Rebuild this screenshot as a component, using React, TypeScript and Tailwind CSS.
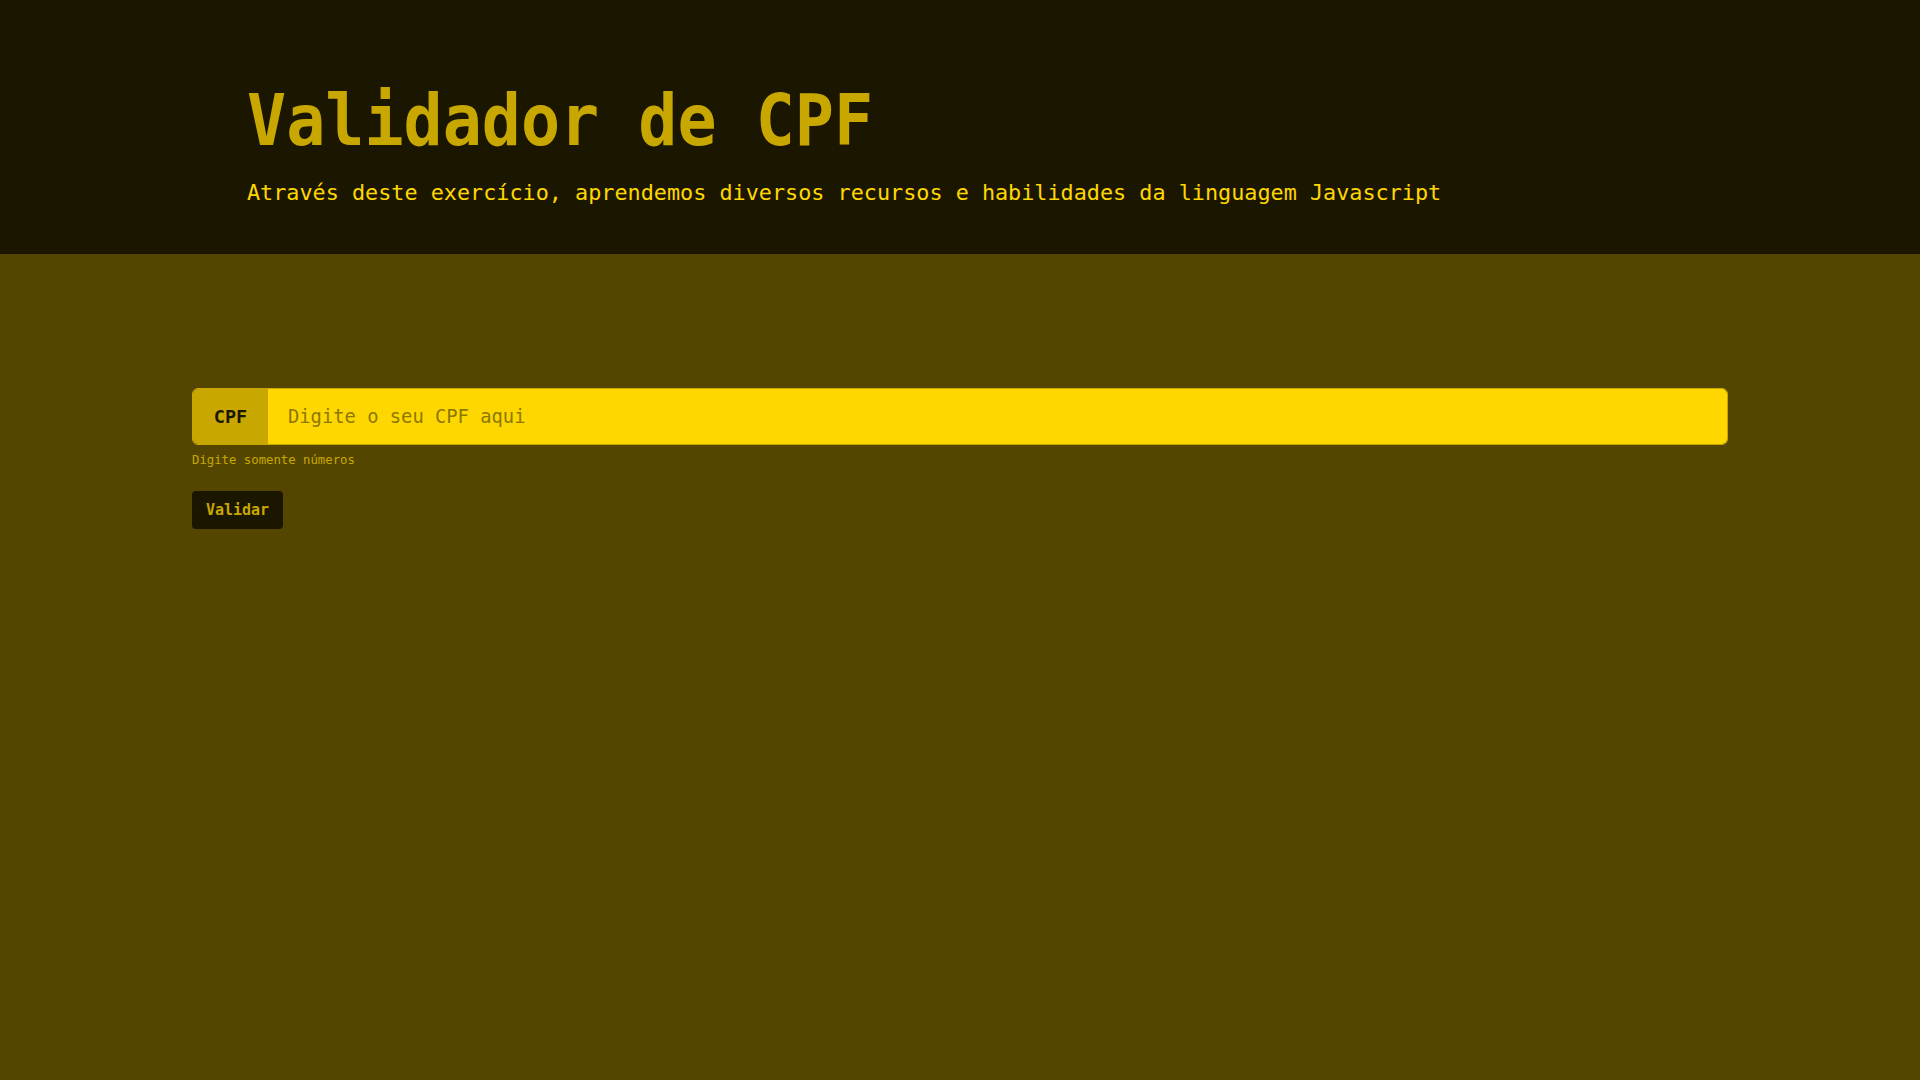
export default function App() {
  const mono = { fontFamily: '"DejaVu Sans Mono", "Liberation Mono", monospace' };

  return (
    <div className="min-h-screen bg-[#544600] flex flex-col" style={mono}>
      {/* Header */}
      <header className="bg-[#1b1600] h-[254px]">
        <div className="max-w-[1536px] mx-auto px-[55px] pt-[90px]">
          <h1 className="text-[65px] leading-[65px] text-[#c8a800] font-bold scale-y-[1.1] origin-[0_55px]">
            Validador de CPF
          </h1>
          <p className="mt-[21px] text-[21.8px] leading-[33px] text-[#ffd700]">
            Através deste exercício, aprendemos diversos recursos e habilidades da linguagem Javascript
          </p>
        </div>
      </header>

      {/* Form */}
      <main className="w-full max-w-[1536px] mx-auto pt-[134px]">
        <div className="flex h-[57px] rounded-[6px] border border-[#c8a800] overflow-hidden">
          <span className="w-[75px] shrink-0 bg-[#c8a800] flex items-center justify-center text-[18.5px] font-bold text-[#1b1600]">
            CPF
          </span>
          <input
            type="text"
            placeholder="Digite o seu CPF aqui"
            className="flex-1 bg-[#ffd700] px-5 pt-[2px] text-[18.8px] text-[#1b1600] placeholder:text-[#8c7800] outline-none"
            style={mono}
          />
        </div>
        <p className="mt-[7px] text-[12.3px] leading-4 text-[#c8a800]">Digite somente números</p>
        <button
          className="mt-[23px] w-[91px] h-[38px] rounded-[4px] bg-[#1b1600] text-[#c8a800] text-[15px] font-bold"
          style={mono}
        >
          Validar
        </button>
      </main>
    </div>
  );
}
